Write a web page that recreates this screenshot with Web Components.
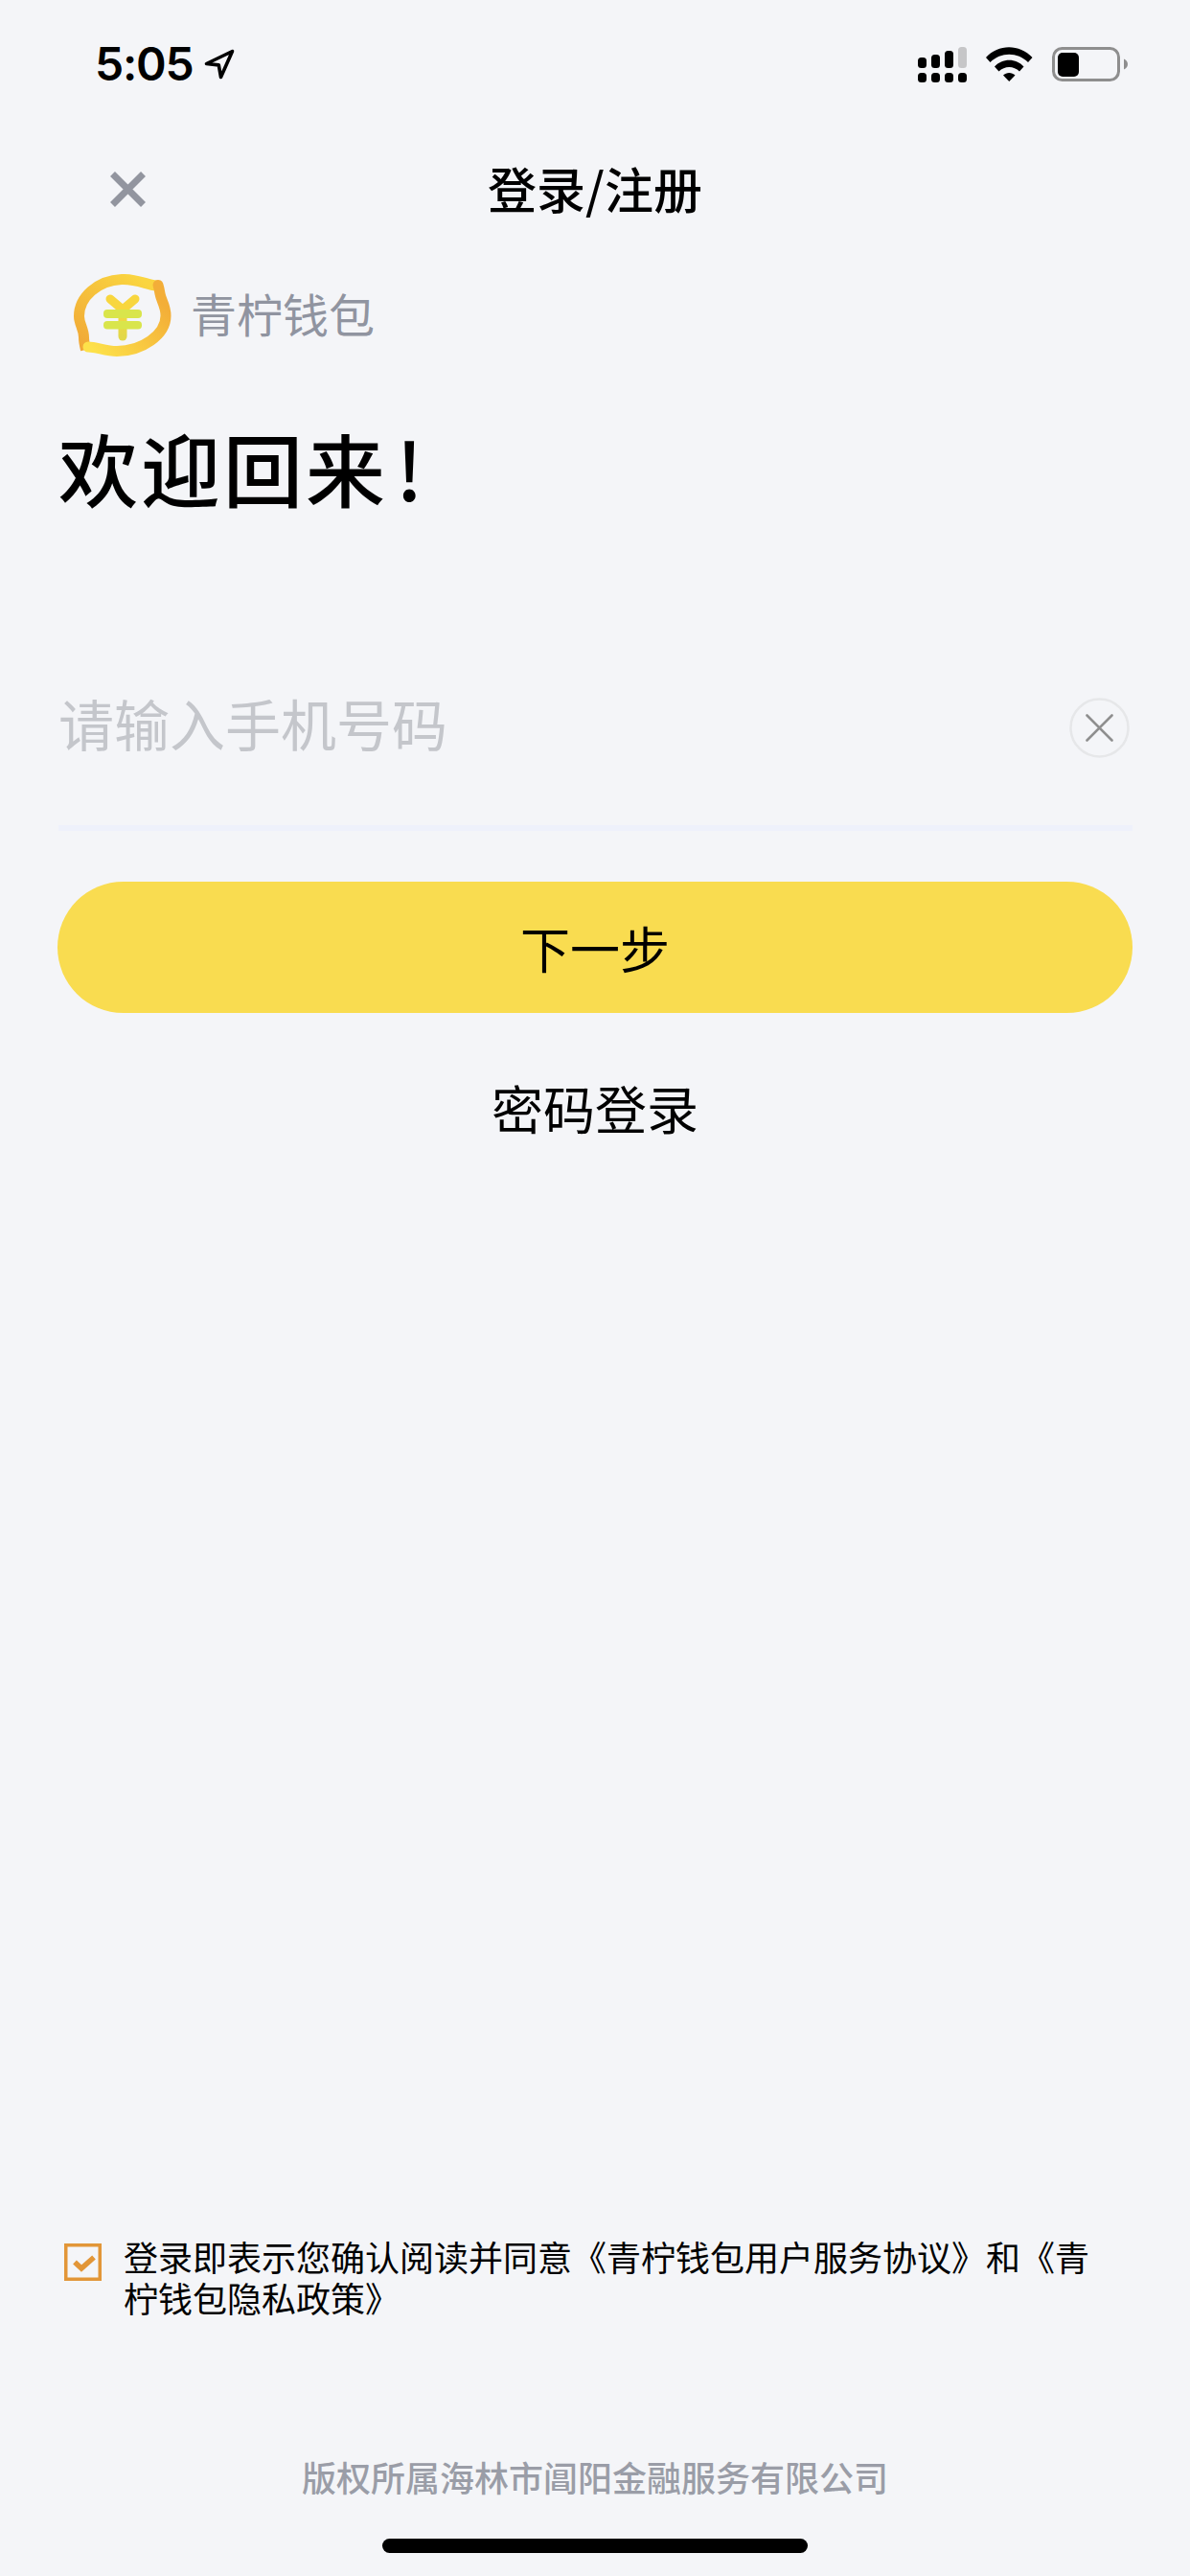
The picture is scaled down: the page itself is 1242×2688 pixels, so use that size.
<!DOCTYPE html>
<html><head><meta charset="utf-8"><style>
html,body{margin:0;padding:0;background:#f4f5f8}
body{font-family:"Noto Sans CJK SC",sans-serif;color:#000}
welcome-title span{margin-left:8px}
</style></head><body>
<login-page>
  <nav-bar>登录/注册</nav-bar>
  <brand-row>青柠钱包</brand-row>
  <welcome-title>欢迎回来<span>!</span></welcome-title>
  <phone-input>请输入手机号码</phone-input>
  <primary-button>下一步</primary-button>
  <link-row>密码登录</link-row>
  <agree-row slot="foot">登录即表示您确认阅读并同意《青柠钱包用户服务协议》和《青柠钱包隐私政策》</agree-row>
  <copy-line slot="foot">版权所属海林市阊阳金融服务有限公司</copy-line>
</login-page>
<script>
function def(name,html){
  customElements.define(name,class extends HTMLElement{
    constructor(){super();this.attachShadow({mode:'open'}).innerHTML=html}
  });
}
def('login-page',`<style>
:host{display:flex;flex-direction:column;width:1242px;height:2688px}
.status{flex:none;height:134px;display:flex;align-items:center;justify-content:space-between;padding:0 65px 0 99px;box-sizing:border-box}
.l,.r{display:flex;align-items:center}
.l{gap:11px;font:600 48px/1 Inter,sans-serif;letter-spacing:-1.2px}
.l svg{margin-top:-1px}
.r{gap:20px}
.main{display:flex;flex-direction:column;flex:1}
.foot{display:flex;flex-direction:column}
.home{width:444px;height:15px;border-radius:7.5px;background:#000;margin:39px auto 24px}
</style>
<div class="status">
 <div class="l"><span>5:05</span>
  <svg width="32" height="32" viewBox="0 0 32 32"><path d="M29.5 2.5 2.5 15.5l12.8 1.4 2.2 12.6z" fill="none" stroke="#000" stroke-width="3.6" stroke-linejoin="round"/></svg></div>
 <div class="r">
  <svg width="51" height="37" viewBox="0 0 51 37"><g fill="#000"><rect x="0" y="11" width="9" height="11" rx="3.5"/><rect x="14" y="8" width="9" height="14" rx="3.5"/><rect x="28" y="4" width="9" height="18" rx="3.5"/><rect x="0" y="27" width="9" height="10" rx="3.5"/><rect x="14" y="27" width="9" height="10" rx="3.5"/><rect x="28" y="27" width="9" height="10" rx="3.5"/><rect x="42" y="27" width="9" height="10" rx="3.5"/></g><rect x="42" y="0" width="9" height="22" rx="3.5" fill="#c6c6c8"/></svg>
  <svg width="49" height="36" viewBox="0 0 49 36"><path d="M0 11C13-3.500 35-3.500 48.500 11L44 16C33 5 15.500 5 4.500 16z"/><path d="M9 20.500C17 11.500 31.500 11.500 39.500 20.500L35 25.500C29 19.500 19.500 19.500 13.500 25.500z"/><path d="M18 29.500C21.500 26 27 26 30.500 29.500L24.250 36z"/></svg>
  <svg width="79" height="36" viewBox="0 0 79 36"><rect x="1.500" y="1.500" width="68" height="33" rx="9" fill="none" stroke="#8e8e8e" stroke-width="3"/><rect x="6" y="6" width="22" height="25" rx="5"/><path d="M75 12.500c2.500 1 4 3 4 5.500s-1.500 4.500-4 5.500z" fill="#8e8e8e"/></svg>
 </div>
</div>
<div class="main"><slot></slot></div>
<div class="foot"><slot name="foot"></slot><div class="home"></div></div>`);
def('nav-bar',`<style>
:host{display:flex;height:126px;align-items:center;justify-content:center;position:relative;font-size:51px;font-weight:500;flex:none;padding-bottom:3px;box-sizing:border-box}
svg{position:absolute;left:115px;top:45px}
</style><svg width="37" height="37" viewBox="0 0 37 37"><path d="M2.500 2.500l32 32M34.500 2.500l-32 32" stroke="#92959f" stroke-width="7"/></svg><slot></slot>`);
def('brand-row',`<style>
:host{display:flex;align-items:center;gap:20px;margin:26px 0 0 77px;height:86px;font-size:48px;color:#9094a0;flex:none}
span{margin-top:-6px}
</style><svg width="102" height="86" viewBox="0 0 102 86" fill="none">
<defs>
<linearGradient id="a" x1="0.8" y1="0" x2="0" y2="1"><stop offset="0" stop-color="#fad540"/><stop offset="1" stop-color="#f0a636"/></linearGradient>
<linearGradient id="b" x1="0" y1="0.9" x2="0.9" y2="0.2"><stop offset="0" stop-color="#fde14a"/><stop offset="1" stop-color="#f3ae38"/></linearGradient>
<linearGradient id="c" gradientUnits="userSpaceOnUse" x1="51" y1="37" x2="51" y2="65"><stop offset="0" stop-color="#f8d63e"/><stop offset="1" stop-color="#e2d84a"/></linearGradient>
</defs>
<path d="M86 12C76 11 66 5 50 5.500 25 6.500 5.500 24 5.500 44c0 8 5 13 5 22 0 5 1 9 2 13" stroke="url(#a)" stroke-width="11"/>
<path d="M15 76c9 0 18 4.500 30 4.500 26 0 51-17 51-37 0-11-5-16-6-23-.5-3-1-6-2-9" stroke="url(#b)" stroke-width="11" stroke-linecap="round"/>
<path d="M38 26l13 11 13-11" stroke="#f8d63e" stroke-width="9" stroke-linecap="round" stroke-linejoin="round"/>
<path d="M51 37v28" stroke="url(#c)" stroke-width="9" stroke-linecap="round"/>
<rect x="31" y="37" width="40" height="9" rx="4" fill="#d9e54b"/><rect x="31" y="49" width="40" height="8.500" rx="4" fill="#d9e54b"/>
</svg><span><slot></slot></span>`);
def('welcome-title',`<style>
:host{display:block;margin:60px 0 5px 61px;font-size:83px;font-weight:500;line-height:110px;letter-spacing:3px;flex:none}
</style><slot></slot>`);
def('phone-input',`<style>
:host{display:flex;justify-content:space-between;align-items:center;margin:106px 60px 0 61px;height:208px;font-size:58px;color:#c4c6cb;flex:none;border-bottom:6px solid #eef1fb}
span{margin-top:-6px}
svg{margin-right:3px;margin-top:4px}
</style><span><slot></slot></span><svg width="63" height="63" viewBox="0 0 63 63"><circle cx="31.500" cy="31.500" r="30" fill="none" stroke="#e6e7e9" stroke-width="2.500"/><path d="M18.500 18.500l26 26M44.500 18.500l-26 26" stroke="#8f8f8f" stroke-width="2.600" stroke-linecap="round"/></svg>`);
def('primary-button',`<style>
:host{display:flex;align-items:center;justify-content:center;margin:53px 60px 0;height:137px;border-radius:68.500px;background:#f9dc50;font-size:52px;flex:none}
</style><slot></slot>`);
def('link-row',`<style>
:host{display:block;margin:61px 0 0;text-align:center;font-size:54px;line-height:76px;flex:none}
</style><slot></slot>`);
def('agree-row',`<style>
:host{display:flex;gap:23px;padding:0 76px 0 67px;font-size:36px;line-height:43px}
svg{flex:none;margin-top:8px}
</style><svg width="39" height="39" viewBox="0 0 39 39"><rect x="1.750" y="1.750" width="35.500" height="35.500" fill="none" stroke="#e29638" stroke-width="3.500"/><path d="M11 19.500l7 6.500 13-11.500" stroke="#e29638" stroke-width="5.500" fill="none"/></svg><span><slot></slot></span>`);
def('copy-line',`<style>
:host{display:block;margin-top:139px;text-align:center;font-size:36px;font-weight:500;color:#9a9da7;line-height:52px}
</style><slot></slot>`);
</script>
</body></html>
